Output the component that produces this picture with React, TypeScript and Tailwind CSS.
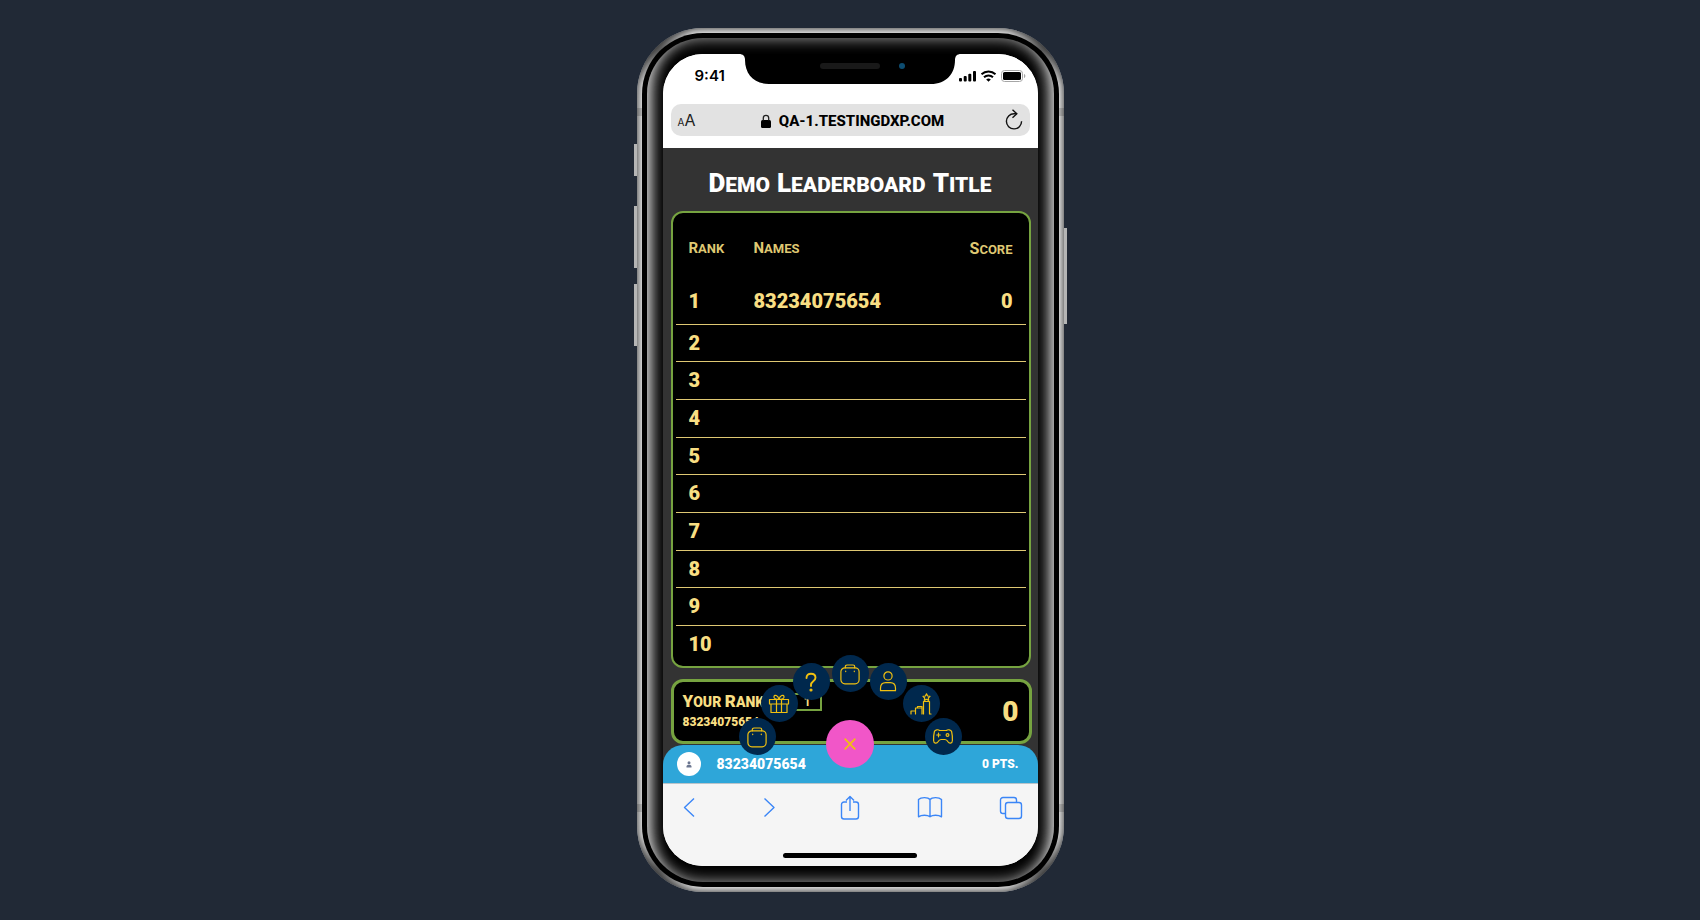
import React from "react";

type MenuItem = { label: string; pos: string; icon: React.ReactNode };

const briefcase = (
  <>
    <rect x="2.900" y="5.800" width="18.200" height="16" rx="4" />
    <path d="M7.300 5.800V4.600a1.600 1.600 0 0 1 1.600-1.600h6.200a1.600 1.600 0 0 1 1.600 1.600v1.200M7.700 9v.6M16.300 9v.6" />
  </>
);

const menu: MenuItem[] = [
  { label: "Store", pos: "left-[76px] top-[664px]", icon: briefcase },
  {
    label: "Rewards",
    pos: "left-[98px] top-[631px]",
    icon: (
      <path d="M2.500 7.500h19v4.500h-19zM4 12h16v8.500H4zM9.500 7.500v13M14.500 7.500v13M12 7.500C9 7.500 6.500 6.500 7 4.500 7.600 2.200 11 3.200 12 7.500c1-4.300 4.400-5.300 5-3C17.500 6.500 15 7.500 12 7.500z" />
    ),
  },
  {
    label: "Help",
    pos: "left-[130px] top-[609px]",
    icon: (
      <>
        <path strokeWidth="1.900" d="M7.500 8C7.500 5 9.300 3.800 12 3.800s4.500 1.600 4.500 4c0 3.400-4.500 3.600-4.500 7v1.200" />
        <circle cx="12" cy="20" r="1" fill="currentColor" />
      </>
    ),
  },
  { label: "Missions", pos: "left-[169px] top-[601px]", icon: briefcase },
  {
    label: "Profile",
    pos: "left-[207px] top-[609px]",
    icon: (
      <>
        <circle cx="12" cy="5.900" r="4.100" />
        <path d="M4.500 20.700v-2.400c0-3.500 2.300-5.600 5.300-5.600h4.400c3 0 5.300 2.100 5.300 5.600v2.400z" />
      </>
    ),
  },
  {
    label: "Leaderboard",
    pos: "left-[240px] top-[631px]",
    icon: (
      <path d="M2 22v-3h4.500V22M6.500 19v-3h6M8.500 16v-1.500h4.500V22M14.500 22V9.500h6V22h1.500M17.500 1.800l1.100 2.200 2.400.3-1.700 1.700.4 2.400-2.200-1.100-2.200 1.100.4-2.400-1.700-1.700 2.400-.3z" />
    ),
  },
  {
    label: "Games",
    pos: "left-[262px] top-[664px]",
    icon: (
      <>
        <path d="M8.500 5.500h7C16.500 4.300 20 4.500 20.600 6.500c.7 3 .9 6 .8 9-.1 3.200-3.200 3.400-4.400 1.300-.8-1.500-1.500-2.300-3-2.300h-4c-1.500 0-2.200.8-3 2.300-1.200 2.100-4.300 1.900-4.400-1.300-.1-3 .1-6 .8-9C4 4.500 7.500 4.300 8.500 5.500z" />
        <path d="M7.500 8.200v3.600M5.700 10h3.600" />
        <circle cx="16.500" cy="10" r="1.400" />
      </>
    ),
  },
];

const rows = Array.from({ length: 10 }, (_, i) => ({
  rank: i + 1,
  name: i === 0 ? "83234075654" : "",
  score: i === 0 ? "0" : "",
}));

function StatusBar() {
  return (
    <div className="flex h-11 shrink-0 items-center justify-between bg-white pr-3 pl-8 text-black">
      <span className="font-['Inter',sans-serif] text-[15px] font-semibold">9:41</span>
      <svg width="68" height="14" viewBox="0 0 68 14" fill="currentColor" aria-label="Signal, Wi-Fi and battery">
        <rect x="1" y="9" width="3" height="3.500" rx="1" />
        <rect x="5.700" y="7" width="3" height="5.500" rx="1" />
        <rect x="10.300" y="4.700" width="3" height="7.800" rx="1" />
        <rect x="15" y="2" width="3" height="10.500" rx="1" />
        <g fill="none" stroke="currentColor" strokeWidth="2">
          <path d="M23.500 5.300a10.200 10.200 0 0 1 14 0" />
          <path d="M26 8.300a6.500 6.500 0 0 1 9 0" />
        </g>
        <path d="M30.500 12.800l-2.300-2.300a3.500 3.500 0 0 1 4.600 0z" />
        <rect x="43.500" y="1.500" width="21" height="11" rx="3" fill="none" stroke="#a6a6a6" />
        <rect x="45" y="3" width="18" height="8" rx="1.600" />
        <path d="M66 5v4c.9-.4 1.300-1.100 1.300-2S66.900 5.400 66 5z" fill="#a6a6a6" />
      </svg>
    </div>
  );
}

function AddressBar() {
  return (
    <div className="h-[50px] shrink-0 bg-white px-2 pt-[6px]">
      <div className="flex h-8 items-center justify-between rounded-[10px] bg-[#e2e2e2] pr-[6px] pl-[7px] text-black">
        <button type="button" aria-label="Text size" className="w-6 text-left font-['Inter',sans-serif] leading-none text-[#222]">
          <span className="text-[10px]">A</span>
          <span className="text-[16px]">A</span>
        </button>
        <div className="flex items-center gap-2 pt-[2px]">
          <svg width="10" height="14" viewBox="0 0 10 14" aria-hidden="true">
            <rect x="0" y="6" width="10" height="8" rx="1.500" fill="#000" />
            <path d="M2.300 6.500V4a2.700 2.700 0 0 1 5.400 0v2.500" fill="none" stroke="#222" strokeWidth="1.300" />
          </svg>
          <span className="text-[15px] font-extrabold">QA-1.TESTINGDXP.COM</span>
        </div>
        <button type="button" aria-label="Reload" className="w-5">
          <svg width="20" height="22" viewBox="0 0 20 22" fill="none" stroke="#111" strokeWidth="1.400">
            <path d="M13.500 4.700H11a7.600 7.600 0 1 0 7.600 7.600" />
            <path d="M9.500 .8l4.300 3.900-4.300 4.100" />
          </svg>
        </button>
      </div>
    </div>
  );
}

function Words({ text, className }: { text: string; className: string }) {
  return (
    <>
      {text.split(" ").map((word, i) => (
        <React.Fragment key={word}>
          {i > 0 && " "}
          <span className={`inline-block uppercase ${className}`}>{word}</span>
        </React.Fragment>
      ))}
    </>
  );
}

const headCaps = "first-letter:text-[15px]";

function Leaderboard() {
  return (
    <section className="mr-[7px] ml-2 rounded-xl border-2 border-[#76a340] bg-black px-[3px] pb-[3px] text-[#f8de83]">
      <table className="w-full table-fixed border-collapse">
        <thead>
          <tr className="h-[65px] text-[13px] font-black text-[#dfc873]">
            <th className="w-[78px] pt-[6px] pl-[13px] text-left">
              <Words text="Rank" className={headCaps} />
            </th>
            <th className="pt-[6px] text-left">
              <Words text="Names" className={headCaps} />
            </th>
            <th className="w-[80px] pt-[6px] pr-[13px] text-right">
              <Words text="Score" className="first-letter:text-[16px]" />
            </th>
          </tr>
        </thead>
        <tbody>
          {rows.map((r) => (
            <tr
              key={r.rank}
              className="h-[38px] border-b border-[#dfc873] text-[20px] leading-6 font-black first:h-[46px] last:border-0 [&:nth-child(3n+2)]:h-[37px]"
            >
              <td className="pl-[13px]">{r.rank}</td>
              <td>{r.name}</td>
              <td className="pr-[13px] text-right">{r.score}</td>
            </tr>
          ))}
        </tbody>
      </table>
    </section>
  );
}

function YourRank() {
  return (
    <section className="mt-[11px] mr-[6px] ml-2 flex h-[65px] items-center justify-between rounded-xl border-3 border-[#76a340] bg-black pr-[10px] pl-[9px] text-[#f8de83]">
      <div>
        <div className="flex items-center gap-7">
          <h2 className="text-[14px] leading-5 font-black">
            <Words text="Your Rank" className="first-letter:text-[17px]" />
          </h2>
          <span className="h-[18px] w-[30px] border-2 border-[#76a340] text-center text-[12px] leading-[14px] font-bold">1</span>
        </div>
        <p className="text-[12px] leading-5 font-black">83234075654</p>
      </div>
      <span className="text-[28px] font-black">0</span>
    </section>
  );
}

function PointsBar() {
  return (
    <div className="relative -mt-[38px] flex h-[38px] shrink-0 items-center rounded-t-[20px] bg-[#2ea6d9] pr-[19px] pl-[14px] text-[14px] font-black text-white">
      <span className="flex size-6 items-center justify-center rounded-full bg-white text-[#6b7690]">
        <svg width="6" height="7" viewBox="0 0 6 7" fill="currentColor" aria-hidden="true">
          <circle cx="3" cy="1.700" r="1.500" />
          <path d="M.5 6.500V5.500C.5 4.300 1.500 3.700 3 3.700s2.500.6 2.500 1.800v1z" />
        </svg>
      </span>
      <span className="ml-4 flex-1">83234075654</span>
      <span className="text-[12px]">0 PTS.</span>
    </div>
  );
}

function RadialMenu() {
  return (
    <nav aria-label="Quick menu">
      {menu.map((m) => (
        <button
          key={m.label}
          type="button"
          aria-label={m.label}
          className={`absolute flex size-[37px] items-center justify-center rounded-full bg-[#00284d] text-[#f0c010] ${m.pos}`}
        >
          <svg width="24" height="24" viewBox="0 0 24 24" fill="none" stroke="currentColor" strokeWidth="1.200" strokeLinecap="round" strokeLinejoin="round">
            {m.icon}
          </svg>
        </button>
      ))}
      <button
        type="button"
        aria-label="Close menu"
        className="absolute top-[666px] left-[163px] flex size-12 items-center justify-center rounded-full bg-[#f156c8] text-[#f0c010]"
      >
        <svg width="12" height="12" viewBox="0 0 12 12" stroke="currentColor" strokeWidth="1.700" strokeLinecap="round">
          <path d="M1.200 1.200l9.600 9.600M10.800 1.200l-9.600 9.600" />
        </svg>
      </button>
    </nav>
  );
}

function ToolButton({ label, children }: { label: string; children: React.ReactNode }) {
  return (
    <button type="button" aria-label={label}>
      <svg width="26" height="26" viewBox="0 0 26 26" fill="none" stroke="#3b86f7" strokeWidth="1.400" strokeLinejoin="round">
        {children}
      </svg>
    </button>
  );
}

function Toolbar() {
  return (
    <div className="flex h-[83px] shrink-0 flex-col items-center justify-between border-t border-[#b9c4ca] bg-[#f5f5f5] pt-[11px] pb-2">
      <div className="flex w-full justify-between pr-[14px] pl-[13px]">
        <ToolButton label="Back">
          <path d="M18 3.500l-9.500 9 9.500 9" />
        </ToolButton>
        <ToolButton label="Forward">
          <path d="M8.500 3.500l9.500 9-9.500 9" />
        </ToolButton>
        <ToolButton label="Share">
          <path d="M10 7H7a2.500 2.500 0 0 0-2.500 2.500v12A2.500 2.500 0 0 0 7 24h12a2.500 2.500 0 0 0 2.500-2.500v-12A2.500 2.500 0 0 0 19 7h-3M13 16V1.500M9 5.500l4-4 4 4" />
        </ToolButton>
        <ToolButton label="Bookmarks">
          <path d="M13 4.500C11 2 4 2 1.500 4.500v17.300c3-2 9-2 11.500 0 2.500-2 8.500-2 11.500 0V4.500C22 2 15 2 13 4.500zM13 4.500v17" />
        </ToolButton>
        <ToolButton label="Tabs">
          <rect x="7.500" y="7.500" width="16" height="16" rx="2.500" />
          <path d="M7.500 18.500H5A2.500 2.500 0 0 1 2.500 16V5A2.500 2.500 0 0 1 5 2.500h11A2.500 2.500 0 0 1 18.500 5v2.500" />
        </ToolButton>
      </div>
      <div className="h-[5px] w-[134px] rounded-full bg-black" />
    </div>
  );
}

function Notch() {
  return (
    <svg className="absolute top-0 left-1/2 -translate-x-1/2" width="222" height="30" viewBox="0 0 222 30" aria-hidden="true">
      <path d="M0 0h222c-4 0-6 2-6 6 0 14-9 24-24 24H30C15 30 6 20 6 6c0-4-2-6-6-6z" fill="#000" />
      <rect x="81" y="9" width="60" height="6" rx="3" fill="#191919" />
      <circle cx="163" cy="12" r="3" fill="#0d4d71" />
    </svg>
  );
}

export default function App() {
  return (
    <div className="flex min-h-screen items-center justify-center bg-[#212936] font-['Roboto',sans-serif]">
      <div className="relative rounded-[66px] bg-[#fdfdfd] bg-[radial-gradient(circle_at_25px_25px,rgba(0,0,0,.6),transparent_38px),radial-gradient(circle_at_calc(100%-25px)_25px,rgba(0,0,0,.6),transparent_38px),radial-gradient(circle_at_25px_calc(100%-25px),rgba(0,0,0,.6),transparent_38px),radial-gradient(circle_at_calc(100%-25px)_calc(100%-25px),rgba(0,0,0,.6),transparent_38px)] p-[5px] shadow-[inset_0_0_11px_0_#000]">
        <i className="absolute top-[116px] -left-[3px] h-8 w-[3px] bg-[#b5b5b5]" />
        <i className="absolute top-[178px] -left-[3px] h-[62px] w-[3px] bg-[#b5b5b5]" />
        <i className="absolute top-[256px] -left-[3px] h-[62px] w-[3px] bg-[#b5b5b5]" />
        <i className="absolute top-[200px] -right-[3px] h-24 w-[3px] bg-[#b5b5b5]" />
        <i className="absolute inset-x-0 top-20 h-2 bg-black/15" />
        <i className="absolute inset-x-0 bottom-20 h-2 bg-black/15" />
        <div className="relative rounded-[61px] bg-black p-[5px]">
          <div className="relative overflow-hidden rounded-[56px] p-4 shadow-[inset_0_0_15px_0_rgba(255,255,255,.66)] before:absolute before:-top-[8%] before:left-0 before:h-[116%] before:w-full before:rounded-[200px/112px] before:shadow-[inset_0_0_20px_0_#fff] before:content-['']">
            <div className="relative flex h-[812px] w-[375px] flex-col overflow-hidden rounded-[40px] bg-white">
              <StatusBar />
              <AddressBar />
              <main className="min-h-0 flex-1 bg-[#333]">
                <h1 className="flex h-[63px] items-center justify-center gap-[7px] pt-2 text-[21px] font-black text-white">
                  <Words text="Demo Leaderboard Title" className="first-letter:text-[26px]" />
                </h1>
                <Leaderboard />
                <YourRank />
              </main>
              <PointsBar />
              <Toolbar />
              <Notch />
              <RadialMenu />
            </div>
          </div>
        </div>
      </div>
    </div>
  );
}
